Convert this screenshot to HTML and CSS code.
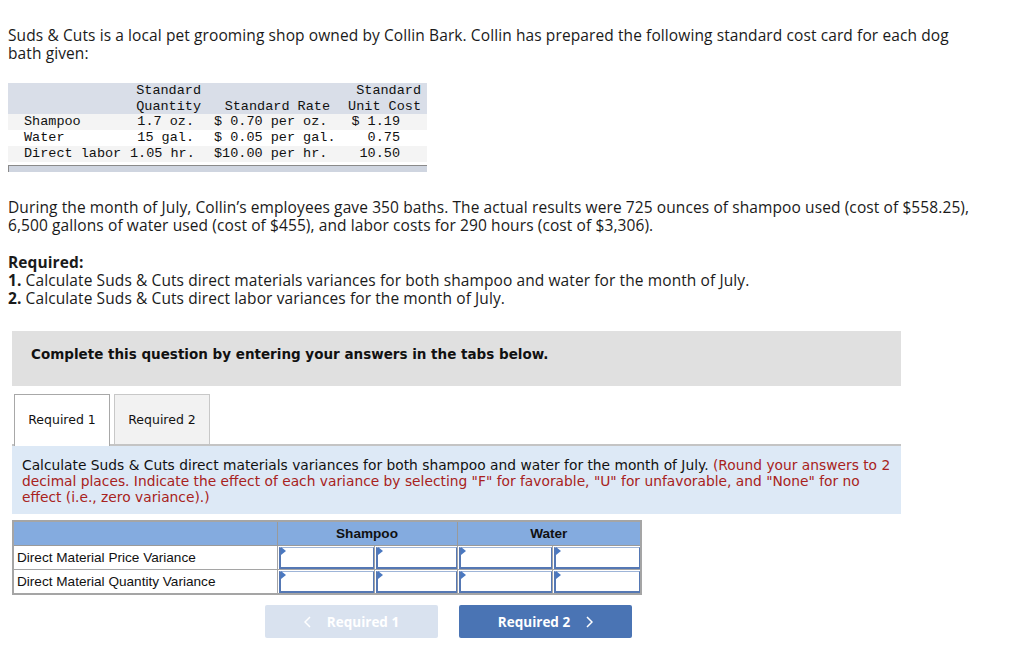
FILE: index.html
```html
<!DOCTYPE html>
<html>
<head>
<meta charset="utf-8">
<link rel="stylesheet" href="styles.css">
</head>
<body>
<div class="page">
  <p class="intro">Suds &amp; Cuts is a local pet grooming shop owned by Collin Bark. Collin has prepared the following standard cost card for each dog bath given:</p>

  <table class="card">
    <colgroup><col class="c1"><col class="c2"><col class="c3"><col class="c4"></colgroup>
    <tr class="hd"><td></td><td class="h2">Standard</td><td></td><td class="h4">Standard</td></tr>
    <tr class="hd"><td></td><td class="h2">Quantity</td><td class="h3">Standard Rate</td><td class="h4">Unit Cost</td></tr>
    <tr class="r1"><td class="l">Shampoo</td><td class="v2">1.7 oz.</td><td class="v3">$ 0.70 per oz.</td><td class="v4">$ 1.19</td></tr>
    <tr class="r2"><td class="l">Water</td><td class="v2">15 gal.</td><td class="v3">$ 0.05 per gal.</td><td class="v4">0.75</td></tr>
    <tr class="r1"><td class="l">Direct labor</td><td class="v2">1.05 hr.</td><td class="v3">$10.00 per hr.</td><td class="v4">10.50</td></tr>
  </table>
  <div class="cardbar"></div>

  <p class="during">During the month of July, Collin’s employees gave 350 baths. The actual results were 725 ounces of shampoo used (cost of $558.25), 6,500 gallons of water used (cost of $455), and labor costs for 290 hours (cost of $3,306).</p>

  <div class="required">
    <div class="req-title">Required:</div>
    <div><b>1.</b> Calculate Suds &amp; Cuts direct materials variances for both shampoo and water for the month of July.</div>
    <div><b>2.</b> Calculate Suds &amp; Cuts direct labor variances for the month of July.</div>
  </div>

  <div class="instructions">Complete this question by entering your answers in the tabs below.</div>

  <div class="tabs">
    <div class="tab active">Required 1</div>
    <div class="tab">Required 2</div>
  </div>

  <div class="prompt">Calculate Suds &amp; Cuts direct materials variances for both shampoo and water for the month of July. <span class="red">(Round your answers to 2 decimal places. Indicate the effect of each variance by selecting "F" for favorable, "U" for unfavorable, and "None" for no effect (i.e., zero variance).)</span></div>

  <table class="answers">
    <colgroup><col class="a1"><col class="a2"><col class="a3"><col class="a4"><col class="a5"></colgroup>
    <tr class="ahd"><th></th><th colspan="2">Shampoo</th><th colspan="2">Water</th></tr>
    <tr>
      <td class="lab">Direct Material Price Variance</td>
      <td class="inp"><div class="box"></div></td>
      <td class="inp"><div class="box"></div></td>
      <td class="inp"><div class="box"></div></td>
      <td class="inp"><div class="box"></div></td>
    </tr>
    <tr>
      <td class="lab">Direct Material Quantity Variance</td>
      <td class="inp"><div class="box"></div></td>
      <td class="inp"><div class="box"></div></td>
      <td class="inp"><div class="box"></div></td>
      <td class="inp"><div class="box"></div></td>
    </tr>
  </table>

  <div class="nav">
    <div class="btn prev"><svg class="chev l" width="7" height="12" viewBox="0 0 7 12"><polyline points="6,1 1,6 6,11" fill="none" stroke="#fff" stroke-width="1.5"/></svg>Required 1</div>
    <div class="btn next">Required 2<svg class="chev r" width="7" height="12" viewBox="0 0 7 12"><polyline points="1,1 6,6 1,11" fill="none" stroke="#fff" stroke-width="1.5"/></svg></div>
  </div>
</div>
</body>
</html>
```

FILE: styles.css
```css
html, body {
  margin: 0;
  padding: 0;
  background: #fff;
}
.page {
  padding: 8px;
  font-family: "Open Sans", Lato, sans-serif;
  font-size: 15.5px;
  letter-spacing: 0.1px;
  color: #1a1a1a;
}
.intro {
  margin: 18px 0 0;
  line-height: 18px;
  width: 960px;
}
.card {
  margin-top: 21px;
  border-collapse: collapse;
  table-layout: fixed;
  width: 419px;
  font-family: "Liberation Mono", "Courier New", monospace;
  font-size: 13.5px;
  letter-spacing: 0;
  color: #111;
}
.card col.c1 { width: 122px; }
.card col.c2 { width: 76px; }
.card col.c3 { width: 130px; }
.card col.c4 { width: 91px; }
.card td {
  padding: 0;
  height: 16px;
  line-height: 16px;
  white-space: pre;
}
.card tr.hd td { background: #d9dee8; height: 15.5px; line-height: 15.5px; }
.card tr.r1 td { background: #f4f4f4; }
.card tr.r2 td { background: #ffffff; }
.card td.l { padding-left: 16px; }
.card td.h2 { text-align: right; padding-right: 5px; }
.card td.h3 { text-align: right; padding-right: 6px; }
.card td.h4 { text-align: right; padding-right: 6px; }
.card td.v2 { text-align: right; padding-right: 12px; }
.card td.v3 { text-align: left; padding-left: 8px; }
.card td.v4 { text-align: right; padding-right: 27px; }
.cardbar {
  margin-top: 3px;
  width: 418px;
  height: 6px;
  background: #cfd5e0;
  border-top: 1px solid #8a8a8a;
  border-left: 1px solid #8a8a8a;
}
.during {
  margin: 26px 0 0;
  line-height: 18px;
  width: 985px;
}
.required {
  margin-top: 19px;
  line-height: 18px;
}
.req-title { font-weight: bold; }
.instructions {
  margin: 24px 0 0 4px;
  width: 889px;
  height: 55px;
  box-sizing: border-box;
  padding: 15px 0 0 19px;
  line-height: 16px;
  background: #e0e0e0;
  font-family: "DejaVu Sans", Verdana, sans-serif;
  font-weight: bold;
  font-size: 13.5px;
  letter-spacing: 0;
  color: #111;
}
.tabs {
  margin: 8px 0 0 4px;
  width: 889px;
  display: flex;
  gap: 4px;
  padding-left: 2px;
  box-sizing: border-box;
  border-bottom: 2px solid #c4c4c4;
  font-family: "DejaVu Sans", Verdana, sans-serif;
  font-size: 12.5px;
  letter-spacing: 0;
  color: #111;
}
.tab {
  width: 96px;
  height: 50px;
  box-sizing: border-box;
  display: flex;
  align-items: center;
  justify-content: center;
  border: 1px solid #c8c8c8;
  border-bottom: none;
  background: #f2f2f2;
}
.tab.active {
  background: #fff;
  border-color: #a8a8a8;
  margin-bottom: -2px;
  height: 52px;
  padding-bottom: 2px;
}
.prompt {
  margin-left: 4px;
  width: 889px;
  height: 68px;
  box-sizing: border-box;
  padding: 11px 10px 0 10px;
  background: #dde9f6;
  font-family: "DejaVu Sans", Verdana, sans-serif;
  font-size: 13.8px;
  letter-spacing: 0;
  line-height: 16px;
  color: #111;
}
.red { color: #a82220; }
.answers {
  margin: 6px 0 0 4px;
  border-collapse: collapse;
  table-layout: fixed;
  width: 629px;
  font-family: "Liberation Sans", Arial, sans-serif;
  font-size: 13.6px;
  letter-spacing: 0;
  color: #111;
  border: 2px solid #a5a5a5;
}
.answers col.a1 { width: 264px; }
.answers col.a2 { width: 97px; }
.answers col.a3 { width: 83px; }
.answers col.a4 { width: 95px; }
.answers col.a5 { width: 89px; }
.answers th {
  background: #84abdf;
  height: 23px;
  padding: 0;
  border: 1px solid #9a9a9a;
  font-weight: bold;
  text-align: center;
}
.answers td {
  border: 1px solid #a5a5a5;
  height: 23px;
  padding: 0;
  background: #fff;
}
.answers td.lab { padding-left: 3px; }
.answers td.inp { position: relative; }
.box {
  height: 19px;
  margin: 0 0 0 1px;
  border: 1px solid #5578b4;
  border-left: 2px solid #5578b4;
  border-bottom: 2px solid #5578b4;
  border-top-color: #9fb5d8;
  background: #fff;
}
.box::before {
  content: "";
  position: absolute;
  left: 3px;
  top: 1px;
  border-top: 4px solid transparent;
  border-bottom: 4px solid transparent;
  border-left: 5px solid #4a78c0;
}
.nav {
  margin: 10px 0 0 257px;
  display: flex;
  gap: 21px;
}
.btn {
  width: 173px;
  height: 33px;
  border-radius: 2px;
  display: flex;
  align-items: center;
  justify-content: center;
  font-family: "Open Sans", Lato, sans-serif;
  font-weight: bold;
  font-size: 13.5px;
  letter-spacing: 0;
  color: #fff;
}
.btn.prev { background: #d9e2ef; }
.btn.next { background: #4a74b4; }
.chev.l { margin-right: 16px; }
.chev.r { margin-left: 16px; }
```
